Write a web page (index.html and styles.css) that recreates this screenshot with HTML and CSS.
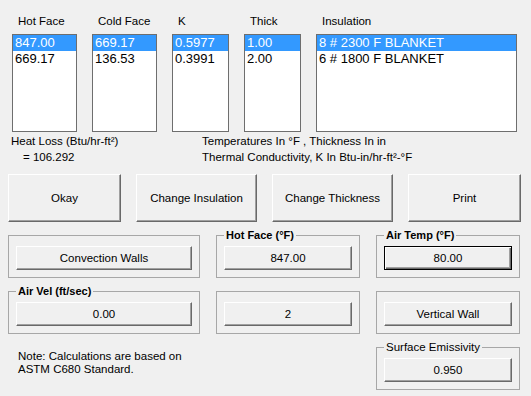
FILE: index.html
```html
<!DOCTYPE html>
<html>
<head>
<meta charset="utf-8">
<link rel="stylesheet" href="styles.css">
</head>
<body>
<div class="app">
  <div class="lists">
    <div class="col">
      <div class="hdr">Hot Face</div>
      <div class="list w65"><div class="item sel">847.00</div><div class="item">669.17</div></div>
    </div>
    <div class="col">
      <div class="hdr">Cold Face</div>
      <div class="list w65"><div class="item sel">669.17</div><div class="item">136.53</div></div>
    </div>
    <div class="col">
      <div class="hdr">K</div>
      <div class="list w57"><div class="item sel">0.5977</div><div class="item">0.3991</div></div>
    </div>
    <div class="col">
      <div class="hdr">Thick</div>
      <div class="list w57"><div class="item sel">1.00</div><div class="item">2.00</div></div>
    </div>
    <div class="col">
      <div class="hdr">Insulation</div>
      <div class="list w201"><div class="item sel">8 # 2300 F BLANKET</div><div class="item">6 # 1800 F BLANKET</div></div>
    </div>
  </div>

  <div class="info">
    <div class="info-left">
      <div>Heat Loss (Btu/hr-ft²)</div>
      <div class="indent">= 106.292</div>
    </div>
    <div class="info-right">
      <div>Temperatures In °F , Thickness In in</div>
      <div>Thermal Conductivity, K In Btu-in/hr-ft²-°F</div>
    </div>
  </div>

  <div class="actions">
    <button class="btn big narrow">Okay</button>
    <button class="btn big wide">Change Insulation</button>
    <button class="btn big wide">Change Thickness</button>
    <button class="btn big narrow">Print</button>
  </div>

  <div class="groups">
    <div class="group"><button class="btn inner">Convection Walls</button></div>
    <div class="group"><span class="legend bold">Hot Face (°F)</span><button class="btn inner">847.00</button></div>
    <div class="group"><span class="legend bold">Air Temp (°F)</span><button class="btn inner focus">80.00</button></div>
    <div class="group"><span class="legend bold">Air Vel (ft/sec)</span><button class="btn inner">0.00</button></div>
    <div class="group"><button class="btn inner">2</button></div>
    <div class="group"><button class="btn inner">Vertical Wall</button></div>
    <div class="note">Note: Calculations are based on<br>ASTM C680 Standard.</div>
    <div class="empty"></div>
    <div class="group"><span class="legend">Surface Emissivity</span><button class="btn inner">0.950</button></div>
  </div>
</div>
</body>
</html>
```
FILE: styles.css
```css
* { box-sizing: border-box; }
html, body {
  margin: 0;
  padding: 0;
  background: #f0f0f0;
  width: 531px;
  height: 396px;
  overflow: hidden;
}
body {
  font-family: "Liberation Sans", Arial, sans-serif;
  font-size: 11.5px;
  color: #000;
}
.app { width: 531px; }

.lists {
  display: flex;
  gap: 15px;
  padding: 14px 0 0 12px;
}
.col { display: flex; flex-direction: column; }
.hdr {
  height: 14px;
  line-height: 14px;
  padding-left: 6px;
  margin-bottom: 6px;
  white-space: nowrap;
}
.list {
  height: 98px;
  background: #fff;
  border: 1px solid #6e6e6e;
  font-size: 13px;
}
.w65 { width: 65px; }
.w57 { width: 57px; }
.w201 { width: 201px; }
.item {
  height: 16px;
  line-height: 16px;
  padding-left: 2px;
  white-space: nowrap;
  overflow: hidden;
}
.item.sel { background: #3399ff; color: #fff; }

.info {
  display: flex;
  line-height: 16px;
  margin-top: 1px;
}
.info-left { width: 202px; padding-left: 11px; }
.indent { padding-left: 12px; }

.actions {
  display: flex;
  gap: 15px;
  margin: 9px 0 0 8px;
}
.btn {
  font-family: "Liberation Sans", Arial, sans-serif;
  font-size: 11.5px;
  color: #000;
  background: #f0f0f0;
  border: 1px solid;
  border-color: #ffffff #696969 #696969 #ffffff;
  box-shadow: inset -1px -1px 0 #a0a0a0;
  padding: 0;
  margin: 0;
  white-space: nowrap;
}
.big { height: 48px; }
.narrow { width: 113px; }
.wide { width: 121px; }

.groups {
  display: grid;
  grid-template-columns: 192px 144px 144px;
  grid-template-rows: 43px 43px 43px;
  column-gap: 16px;
  row-gap: 13px;
  margin: 13px 0 0 8px;
}
.group {
  position: relative;
  border: 1px solid #a7a7a7;
  padding: 10px 7px 0 7px;
}
.legend {
  position: absolute;
  top: -7px;
  left: 7px;
  padding: 0 2px;
  line-height: 13px;
  font-size: 11.5px;
  background: #f0f0f0;
  white-space: nowrap;
}
.legend.bold { font-weight: bold; font-size: 11px; }
.inner {
  display: block;
  width: 100%;
  height: 24px;
}
.inner.focus {
  border: 1px solid #000;
  box-shadow: inset 1px 1px 0 #ffffff, inset -1px -1px 0 #696969, inset -2px -2px 0 #a0a0a0;
}
.note {
  padding: 3px 0 0 10px;
  line-height: 13px;
}
```
